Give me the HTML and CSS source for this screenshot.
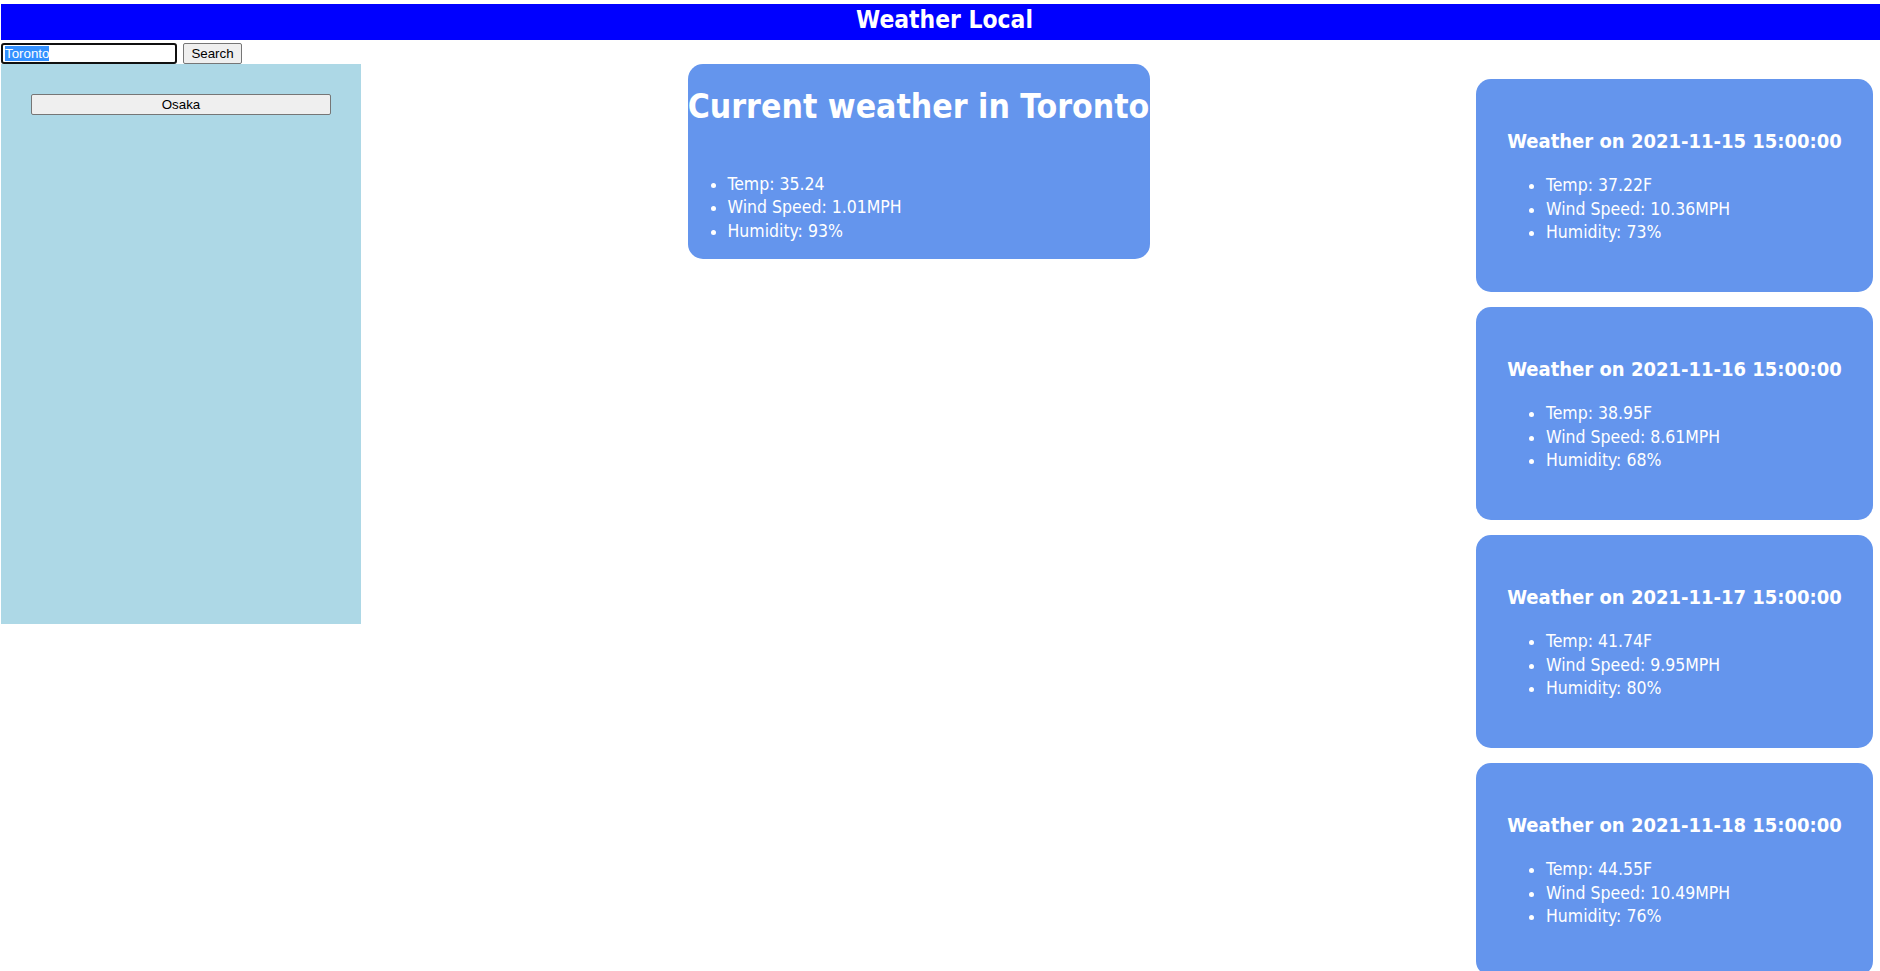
FILE: index.html
```html
<!DOCTYPE html>
<html lang="en">
<head>
<meta charset="utf-8">
<title>Weather Local</title>
<link rel="stylesheet" href="styles.css">
</head>
<body>
<header class="app-header">
  <h1 class="app-title">Weather Local</h1>
</header>
<form class="search-row" onsubmit="return false">
  <input class="search-input" type="text" value="Toronto" autofocus>
  <button class="btn search-btn" type="button">Search</button>
</form>
<main class="main-row">
  <aside class="sidebar">
    <button class="btn city-btn" type="button">Osaka</button>
  </aside>
  <section class="current-card">
    <h2 class="current-title">Current weather in Toronto</h2>
    <ul class="stats">
      <li>Temp: 35.24</li>
      <li>Wind Speed: 1.01MPH</li>
      <li>Humidity: 93%</li>
    </ul>
  </section>
  <section class="forecast">
    <article class="forecast-card">
      <h3 class="forecast-title">Weather on 2021-11-15 15:00:00</h3>
      <ul class="stats">
        <li>Temp: 37.22F</li>
        <li>Wind Speed: 10.36MPH</li>
        <li>Humidity: 73%</li>
      </ul>
    </article>
    <article class="forecast-card">
      <h3 class="forecast-title">Weather on 2021-11-16 15:00:00</h3>
      <ul class="stats">
        <li>Temp: 38.95F</li>
        <li>Wind Speed: 8.61MPH</li>
        <li>Humidity: 68%</li>
      </ul>
    </article>
    <article class="forecast-card">
      <h3 class="forecast-title">Weather on 2021-11-17 15:00:00</h3>
      <ul class="stats">
        <li>Temp: 41.74F</li>
        <li>Wind Speed: 9.95MPH</li>
        <li>Humidity: 80%</li>
      </ul>
    </article>
    <article class="forecast-card">
      <h3 class="forecast-title">Weather on 2021-11-18 15:00:00</h3>
      <ul class="stats">
        <li>Temp: 44.55F</li>
        <li>Wind Speed: 10.49MPH</li>
        <li>Humidity: 76%</li>
      </ul>
    </article>
  </section>
</main>
<script src="script.js"></script>
</body>
</html>
```
FILE: styles.css
```css
html {
  scrollbar-width: none;
}
body {
  margin: 4px 0 0 1px;
  font-family: "DejaVu Sans Condensed", "DejaVu Sans", sans-serif;
  font-stretch: condensed;
  color: #000;
  background: #fff;
}
.app-header {
  background: #0000ff;
  height: 36px;
}
.app-title {
  margin: 0;
  padding-left: 8px;
  font-size: 24.4px;
  line-height: 32px;
  font-weight: bold;
  color: #fff;
  text-align: center;
}
.search-row {
  display: flex;
  align-items: center;
  gap: 6px;
  margin: 2px 0 0 0;
  height: 22px;
}
.search-input {
  box-sizing: border-box;
  width: 176px;
  height: 21px;
  margin: 0;
  padding: 1px 2px;
  border: 2px solid #101010;
  border-radius: 3px;
  outline: none;
  font-family: "Liberation Sans", Arial, sans-serif;
  font-stretch: normal;
  font-size: 13.33px;
  color: #000;
  background: #fff;
}
.search-input::selection {
  background: #3390ff;
  color: #fff;
}
.btn {
  box-sizing: border-box;
  height: 21px;
  margin: 0;
  padding: 0 6px;
  border: 1px solid #767676;
  border-radius: 2px;
  background: #efefef;
  font-family: "Liberation Sans", Arial, sans-serif;
  font-stretch: normal;
  font-size: 13.33px;
  color: #000;
}
.search-btn {
  width: 59px;
}
.main-row {
  display: flex;
  justify-content: space-between;
  align-items: flex-start;
  padding-right: 7px;
}
.sidebar {
  box-sizing: border-box;
  width: 360px;
  height: 560px;
  padding: 30px;
  background: #add8e6;
}
.city-btn {
  display: block;
  width: 100%;
}
.current-card {
  box-sizing: border-box;
  width: 462px;
  padding: 23.4px 0 15.75px;
  background: #6495ed;
  border-radius: 15px;
  color: #fff;
}
.current-title {
  margin: 0;
  font-size: 33.5px;
  line-height: 40px;
  font-weight: bold;
  text-align: center;
  white-space: nowrap;
}
.stats {
  margin: 0;
  padding-left: 40px;
  font-size: 17.5px;
  line-height: 23.5px;
}
.current-card .stats {
  margin-top: 45.35px;
}
.forecast {
  display: flex;
  flex-direction: column;
  gap: 15px;
  margin-top: 15px;
}
.forecast-card {
  box-sizing: border-box;
  width: 397px;
  padding: 30px;
  background: #6495ed;
  border-radius: 15px;
  color: #fff;
}
.forecast-title {
  margin: 19.6px 0 0;
  font-size: 20px;
  line-height: 24px;
  font-weight: bold;
  text-align: center;
  white-space: nowrap;
}
.forecast-card .stats {
  margin: 21.65px 0 17.25px;
}
```
FILE: script.js
```js
var input = document.querySelector('.search-input');
input.focus();
input.select();
```
